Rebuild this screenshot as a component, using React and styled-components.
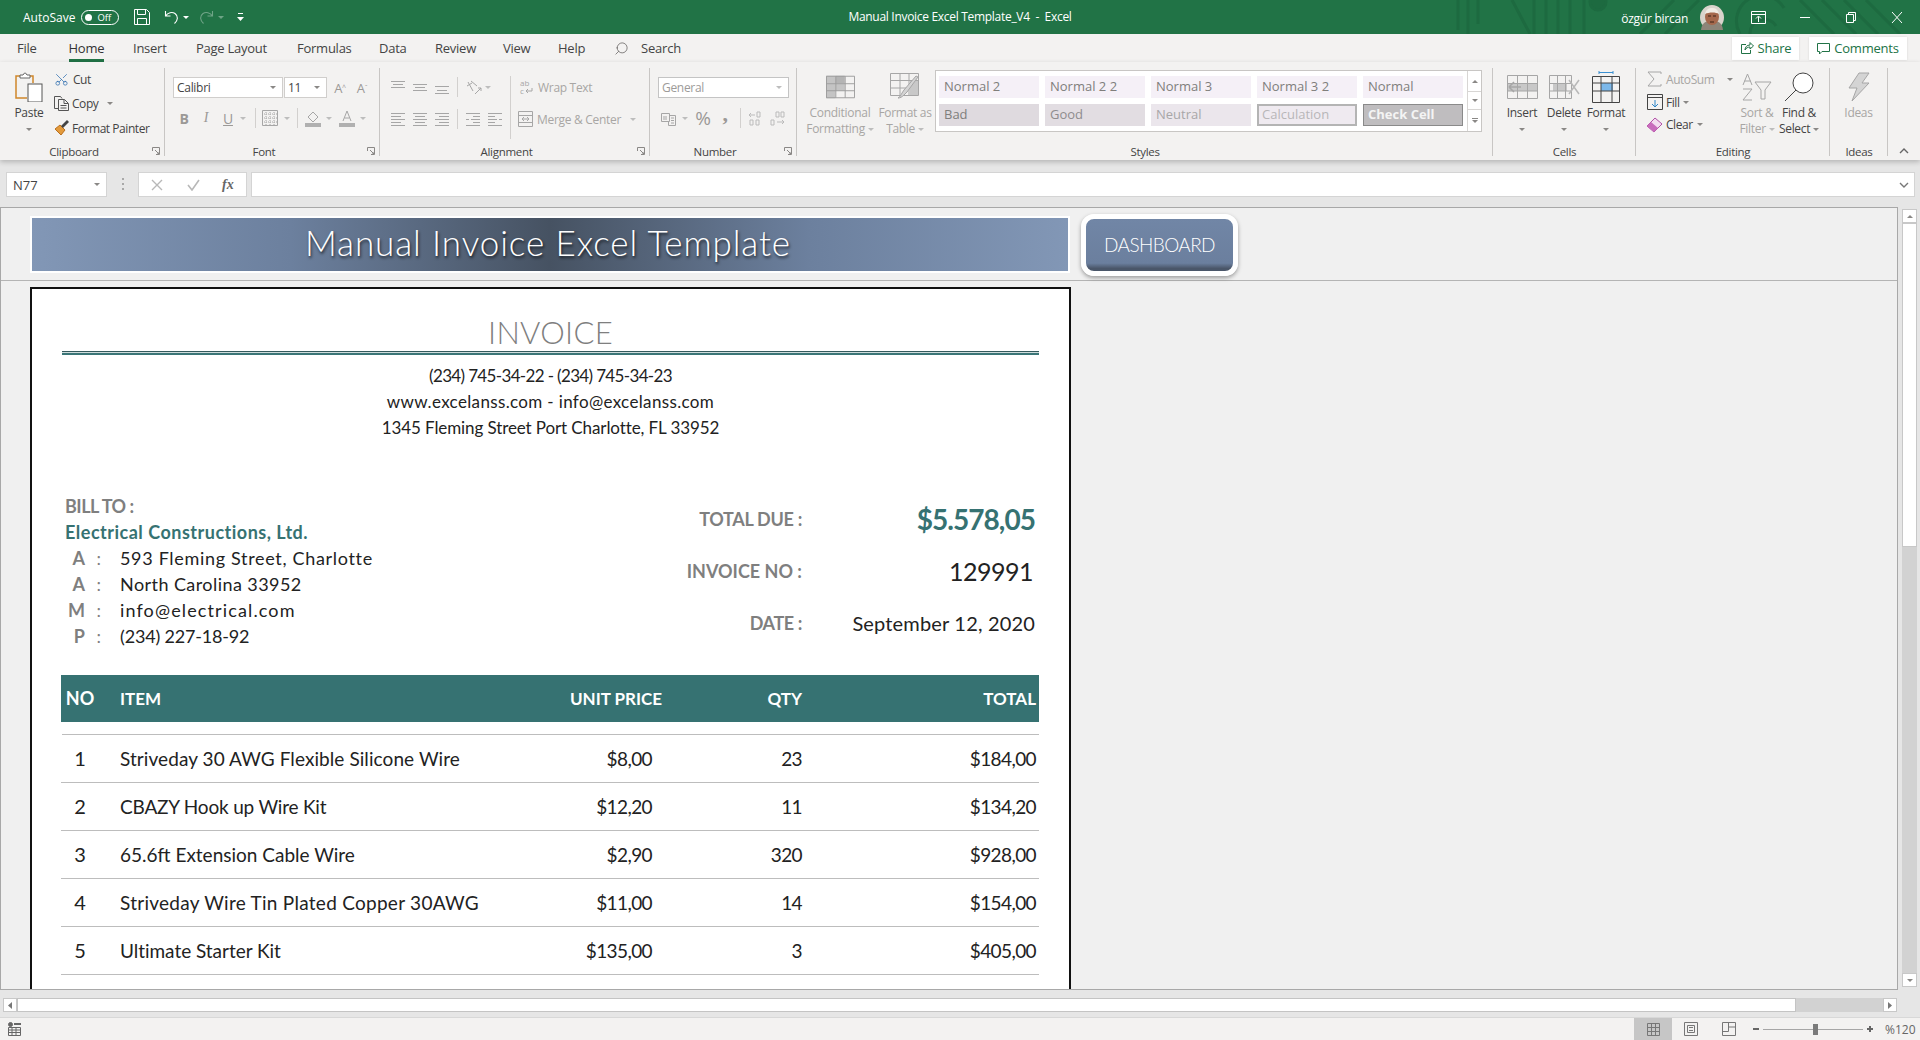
import React from "react";
import styled, { createGlobalStyle } from "styled-components";
import { Search, Scissors } from "lucide-react";

const UI = `"Open Sans", "Noto Sans", sans-serif`;
const GOTHIC = `Lato, "Open Sans", sans-serif`;

const Global = createGlobalStyle`
  html, body { margin: 0; padding: 0; background: #f3f2f1; }
  * { box-sizing: border-box; }
  #root { width: 1920px; height: 1040px; overflow: hidden; }
`;

const Page = styled.div`
  width: 1920px;
  height: 1040px;
  display: flex;
  flex-direction: column;
  font-family: ${UI};
  overflow: hidden;
`;

/* title bar */
const TitleBar = styled.div`
  position: relative;
  height: 34px;
  background: #217346;
  color: #fff;
  display: flex;
  align-items: center;
  font-size: 12px;
  flex-shrink: 0;
`;
const Pattern = styled.svg`
  position: absolute;
  right: 0;
  top: 0;
`;
const TitleSide = styled.div`
  position: relative;
  flex: 1;
  display: flex;
  align-items: center;
  justify-content: ${(p) => (p.$end ? "flex-end" : "flex-start")};
`;
const AutoSave = styled.span`
  margin-left: 23px;
`;
const TitleText = styled.div`
  position: relative;
  letter-spacing: -0.3px;
  margin-top: -2px;
  white-space: pre;
`;
const Toggle = styled.div`
  width: 37.5px;
  height: 15px;
  margin-left: 6px;
  border: 1px solid #fff;
  border-radius: 8px;
  display: flex;
  align-items: center;
  padding-left: 3px;
  font-size: 9.5px;
  &::before {
    content: "";
    width: 7px;
    height: 7px;
    border-radius: 50%;
    background: #fff;
    margin-right: 5px;
  }
`;
const TitleIcon = styled.div`
  display: flex;
  margin-left: ${(p) => p.$ml || 0}px;
  opacity: ${(p) => (p.$dim ? 0.35 : 1)};
`;
const UserName = styled.span`
  margin-top: 3px;
  letter-spacing: -0.25px;
  font-size: 12px;
`;

/* tabs */
const TabRow = styled.div`
  height: 28px;
  background: #f3f2f1;
  display: flex;
  align-items: stretch;
  padding: 0 13px 0 17px;
  font-size: 13px;
  color: #444;
  flex-shrink: 0;
`;
const Tab = styled.div`
  width: ${(p) => p.$w}px;
  flex-shrink: 0;
  display: flex;
  align-items: center;
  letter-spacing: -0.25px;
  span {
    height: 28px;
    line-height: 29px;
    border-bottom: ${(p) => (p.$active ? "3px solid #217346" : "0")};
    color: ${(p) => (p.$active ? "#333" : "#444")};
  }
`;
const SearchBox = styled.div`
  display: flex;
  align-items: center;
  gap: 12px;
  letter-spacing: -0.2px;
`;
const ShareBtn = styled.div`
  align-self: center;
  height: 23px;
  width: ${(p) => p.$w}px;
  margin-left: ${(p) => (p.$auto ? "auto" : p.$ml + "px")};
  background: #fff;
  color: #217346;
  box-shadow: 0 0 2px rgba(0, 0, 0, 0.12);
  display: flex;
  align-items: center;
  justify-content: center;
  gap: 4px;
  font-size: 13px;
  letter-spacing: -0.2px;
`;

/* ribbon */
const Ribbon = styled.div`
  height: 98px;
  background: #f3f2f1;
  display: flex;
  position: relative;
  z-index: 2;
  font-size: 12px;
  color: #444;
  letter-spacing: -0.3px;
  box-shadow: 0 2px 5px rgba(0, 0, 0, 0.22);
  flex-shrink: 0;
`;
const Group = styled.div`
  width: ${(p) => p.$w}px;
  flex-shrink: 0;
  position: relative;
  display: flex;
  flex-direction: column;
  &::after {
    content: "";
    position: absolute;
    right: 0;
    top: 6px;
    bottom: 4px;
    width: 1px;
    background: #c8c6c4;
  }
`;
const GroupBody = styled.div`
  height: 80px;
  flex-shrink: 0;
  padding: ${(p) => p.$pt ?? 10}px 0 0 ${(p) => p.$pl || 0}px;
  display: flex;
  align-items: flex-start;
`;
const GroupLabel = styled.div`
  flex-shrink: 0;
  text-align: center;
  padding-right: ${(p) => (p.$launch ? 17 : 0)}px;
  line-height: 20px;
  font-size: 11.5px;
  color: #444;
`;
const Launcher = styled.svg`
  position: absolute;
  right: 5px;
  bottom: 5px;
`;
const Collapse = styled.div`
  flex: 1;
  display: flex;
  align-items: flex-end;
  justify-content: center;
  padding-bottom: 6px;
`;
const Big = styled.div`
  width: ${(p) => p.$w}px;
  margin-left: ${(p) => p.$ml || 0}px;
  margin-top: ${(p) => p.$mt || 0}px;
  display: flex;
  flex-direction: column;
  align-items: center;
  color: ${(p) => (p.$off ? "#a8a6a4" : "#444")};
  line-height: 16px;
  text-align: center;
  white-space: nowrap;
`;
const BigIcon = styled.div`
  height: 30px;
  margin-bottom: 3px;
  display: flex;
  align-items: center;
  justify-content: center;
`;
const Caret = styled.i`
  display: inline-block;
  width: 0;
  height: 0;
  vertical-align: middle;
  border-left: 3px solid transparent;
  border-right: 3px solid transparent;
  border-top: 3px solid ${(p) => p.$c || "#8a8886"};
  margin-left: ${(p) => p.$ml || 0}px;
  margin-top: ${(p) => p.$mt || 0}px;
  flex-shrink: 0;
`;
const Col = styled.div`
  display: flex;
  flex-direction: column;
  width: ${(p) => (p.$w ? p.$w + "px" : "auto")};
  margin-left: ${(p) => p.$ml || 0}px;
  margin-top: ${(p) => p.$mt || 0}px;
`;
const SmallBtn = styled.div`
  display: flex;
  align-items: center;
  height: ${(p) => p.$h || 24}px;
  color: ${(p) => (p.$off ? "#a8a6a4" : "#444")};
  gap: ${(p) => p.$gap ?? 4}px;
  letter-spacing: -0.45px;
  white-space: nowrap;
`;
const ToolRow = styled.div`
  display: flex;
  align-items: center;
  height: ${(p) => p.$h}px;
  margin-top: ${(p) => p.$mt || 0}px;
  color: #a8a6a4;
  white-space: nowrap;
`;
const WrapGlyph = styled.div`
  width: 15px;
  display: flex;
  flex-direction: column;
  font-size: 8px;
  line-height: 8px;
  letter-spacing: 0;
  color: #a6a6a6;
  div {
    display: flex;
    align-items: center;
    gap: 1px;
  }
`;
const Select = styled.div`
  width: ${(p) => p.$w}px;
  height: 21px;
  margin-left: ${(p) => p.$ml || 0}px;
  background: #fff;
  border: 1px solid ${(p) => (p.$off ? "#c4c4c4" : "#d0cecc")};
  color: ${(p) => (p.$off ? "#9d9b99" : "#444")};
  display: flex;
  align-items: center;
  justify-content: space-between;
  padding: 0 6px 0 3px;
  font-size: 12px;
`;
const Cell = styled.div`
  width: ${(p) => p.$w}px;
  margin-left: ${(p) => p.$ml || 0}px;
  margin-top: ${(p) => p.$mt || 0}px;
  display: flex;
  justify-content: center;
  align-items: center;
  font: ${(p) => p.$font || "inherit"};
  color: #9b9997;
`;
const VSep = styled.div`
  width: 1px;
  height: ${(p) => p.$h}px;
  margin-left: ${(p) => p.$ml || 0}px;
  background: #d2d0ce;
  flex-shrink: 0;
`;
const Place = styled.div`
  display: flex;
  margin-left: ${(p) => p.$ml || 0}px;
  align-items: center;
`;

/* styles gallery */
const Gallery = styled.div`
  width: 547px;
  height: 62px;
  margin-top: -2px;
  background: #fff;
  border: 1px solid #c8c6c4;
  display: flex;
  justify-content: space-between;
`;
const GalleryGrid = styled.div`
  display: grid;
  grid-template-columns: repeat(5, 100px);
  grid-auto-rows: 22px;
  gap: 6px;
  padding: 5px 0 0 3px;
`;
const StyleCell = styled.div`
  background: ${(p) => p.$bg || "#f5f0f7"};
  color: ${(p) => p.$c || "#807e7c"};
  border: ${(p) => p.$border || "0"};
  font-weight: ${(p) => (p.$bold ? 700 : 400)};
  font-size: 13px;
  line-height: ${(p) => (p.$border ? 17 : 20)}px;
  padding-left: ${(p) => (p.$border ? 3 : 5)}px;
  outline: ${(p) => (p.$double ? "1px solid #8a8a8a" : "0")};
  outline-offset: -1px;
  letter-spacing: 0;
  white-space: nowrap;
  overflow: hidden;
`;
const GalleryScroll = styled.div`
  width: 14px;
  border-left: 1px solid #d8d6d4;
  display: grid;
  grid-template-rows: 21px 18px 1fr;
`;
const ScrollCell = styled.div`
  border-bottom: ${(p) => (p.$last ? 0 : 1)}px solid #d8d6d4;
  display: flex;
  flex-direction: column;
  gap: 1px;
  align-items: center;
  justify-content: center;
`;
const UpCaret = styled.i`
  width: 0;
  height: 0;
  border-left: 3px solid transparent;
  border-right: 3px solid transparent;
  border-bottom: 3px solid #8a8886;
`;
const Dash = styled.i`
  width: 6px;
  height: 1px;
  background: #8a8886;
`;

/* formula bar */
const FormulaBar = styled.div`
  height: 47px;
  background: #e6e6e6;
  display: flex;
  align-items: flex-start;
  padding: 12px 5px 0 6px;
  flex-shrink: 0;
`;
const FormulaBox = styled.div`
  height: 25px;
  width: ${(p) => (p.$w ? p.$w + "px" : "auto")};
  flex: ${(p) => (p.$w ? "none" : 1)};
  margin-left: ${(p) => p.$ml || 0}px;
  background: #fff;
  border: 1px solid #d4d4d4;
  display: flex;
  align-items: center;
  justify-content: ${(p) => p.$justify || "flex-start"};
  padding: ${(p) => p.$pad || "0"};
  font-size: 13px;
  color: #444;
`;
const Dots = styled.div`
  width: 2px;
  height: 12px;
  margin: 6px 0 0 15px;
  background: repeating-linear-gradient(#a8a8a8 0 2px, transparent 2px 5px);
`;
const Fx = styled.span`
  font-family: "Liberation Serif", serif;
  font-style: italic;
  font-weight: 700;
  font-size: 14px;
  color: #666;
  margin-left: 22px;
`;

/* sheet */
const SheetRow = styled.div`
  height: 783px;
  display: flex;
  background: #e6e6e6;
  flex-shrink: 0;
`;
const Sheet = styled.div`
  width: 1898px;
  background: #f0f0f0;
  border: 1px solid #a8a8a8;
  overflow: hidden;
`;
const BannerRow = styled.div`
  height: 73px;
  border-bottom: 1px solid #b4b4b4;
  display: flex;
  align-items: flex-start;
  padding: 10px 0 0 31px;
`;
const Banner = styled.div`
  width: 1036px;
  height: 53px;
  background: linear-gradient(90deg, #8297b6 0%, #6c809e 25%, #465262 50%, #6c809e 75%, #8297b6 100%);
  box-shadow: 0 0 0 2px #fff;
  color: #fff;
  display: flex;
  align-items: center;
  justify-content: center;
  padding: 0 4px 6px 0;
  font-family: ${GOTHIC};
  font-size: 35px;
  font-weight: 300;
  letter-spacing: 0.9px;
  text-shadow: 1px 2px 3px rgba(0, 0, 0, 0.7);
`;
const DashBtn = styled.div`
  width: 157px;
  height: 62px;
  margin: -4px 0 0 13px;
  border: 5px solid #fff;
  border-radius: 13px;
  background: linear-gradient(#7186a6, #6b7f9e 85%, #4a5669 95%);
  box-shadow: 0 2px 4px rgba(0, 0, 0, 0.35);
  color: #fff;
  display: flex;
  align-items: center;
  justify-content: center;
  padding-bottom: 2px;
  font-family: ${GOTHIC};
  font-size: 19px;
  font-weight: 300;
  letter-spacing: -0.6px;
`;
const Invoice = styled.div`
  width: 1041px;
  height: 760px;
  margin: 6px 0 0 29px;
  background: #fff;
  border: 2px solid #111;
  padding: 0 30px;
  font-family: ${GOTHIC};
  color: #222;
`;
const InvoiceTitle = styled.div`
  height: 36px;
  margin-top: 26px;
  line-height: 34px;
  text-align: center;
  font-size: 31px;
  font-weight: 300;
  color: #7f7f7f;
  letter-spacing: 0.3px;
`;
const TitleRule = styled.div`
  height: 4px;
  margin-top: 0;
  border-top: 1px solid #34595c;
  border-bottom: 2px solid #3b7678;
  background: #cfdcdc;
`;
const Contact = styled.div`
  margin-top: 8px;
  text-align: center;
  font-size: 17px;
  line-height: 26px;
`;
const ContactLine = styled.div`
  letter-spacing: ${(p) => p.$ls}px;
`;
const BillWrap = styled.div`
  display: flex;
  justify-content: space-between;
  margin-top: 52px;
`;
const BillTo = styled.div`
  padding-left: 3px;
  font-size: 18px;
  line-height: 26px;
`;
const BillHead = styled.div`
  color: ${(p) => p.$c};
  font-weight: 700;
  letter-spacing: ${(p) => p.$ls || 0}px;
`;
const BillLine = styled.div`
  display: grid;
  grid-template-columns: 20px 16px 1fr;
`;
const BillKey = styled.span`
  text-align: right;
  color: #7f7f7f;
  font-weight: 700;
`;
const BillColon = styled.span`
  text-align: right;
  color: #7f7f7f;
`;
const BillValue = styled.span`
  padding-left: 19px;
  letter-spacing: ${(p) => p.$ls}px;
`;
const Summary = styled.div`
  display: grid;
  grid-template-columns: auto 233px;
  grid-auto-rows: 52px;
  align-items: center;
  margin: 0 4px 0 0;
  height: 156px;
`;
const SummaryKey = styled.div`
  text-align: right;
  color: #7f7f7f;
  font-weight: 700;
  font-size: 18px;
  letter-spacing: ${(p) => p.$ls || 0}px;
`;
const SummaryVal = styled.div`
  text-align: right;
  font-size: ${(p) => p.$size}px;
  font-weight: ${(p) => (p.$bold ? 700 : 400)};
  color: ${(p) => p.$c || "#222"};
  letter-spacing: ${(p) => p.$ls || 0}px;
  padding-right: ${(p) => p.$pr || 0}px;
  padding-bottom: 1px;
`;
const grid = `
  display: grid;
  grid-template-columns: 59px 1fr 120px 140px 237px;
  margin-left: -1px;
  align-items: center;
`;
const TableHead = styled.div`
  ${grid}
  height: 47px;
  margin-top: 26px;
  padding-bottom: 1px;
  background: #367272;
  color: #fff;
  font-weight: 700;
  font-size: 17px;
`;
const TableBody = styled.div`
  margin-top: 12px;
  border-top: 1px solid #bdbdbd;
`;
const TableRow = styled.div`
  ${grid}
  height: 48px;
  padding-bottom: 1px;
  border-bottom: 1px solid #bdbdbd;
  font-size: 19px;
`;
const NoCell = styled.div`
  width: 38px;
  text-align: center;
  font-size: ${(p) => (p.$head ? 18 : 20)}px;
`;
const ItemCell = styled.div`
  white-space: nowrap;
  letter-spacing: ${(p) => p.$ls}px;
`;
const NumCell = styled.div`
  text-align: right;
  padding-right: ${(p) => p.$pr || 0}px;
  letter-spacing: ${(p) => p.$ls || 0}px;
`;

/* scrollbars + status */
const VScroll = styled.div`
  flex: 1;
  padding: 2px 0 0 4px;
  display: flex;
  flex-direction: column;
  height: 780px;
`;
const ScrollBtn = styled.div`
  width: ${(p) => p.$w || 15}px;
  height: ${(p) => p.$h || 14}px;
  background: #fff;
  border: 1px solid #c8c8c8;
  display: flex;
  align-items: center;
  justify-content: center;
  flex-shrink: 0;
`;
const VTrack = styled.div`
  flex: 1;
  width: 15px;
  background: #d2d2d2;
`;
const VThumb = styled.div`
  height: 324px;
  background: #fff;
  border: 1px solid #c8c8c8;
`;
const HStrip = styled.div`
  height: 28px;
  background: #e6e6e6;
  padding: 8px 0 0 3px;
  display: flex;
  flex-shrink: 0;
  border-bottom: 1px solid #d8d8d8;
`;
const HTrack = styled.div`
  width: 1866px;
  height: 14px;
  background: #d2d2d2;
`;
const HThumb = styled.div`
  width: 1779px;
  height: 14px;
  background: #fff;
  border: 1px solid #c4c4c4;
`;
const StatusBar = styled.div`
  flex: 1;
  background: #f3f2f1;
  display: flex;
  align-items: center;
  color: #666;
  font-size: 12px;
  position: relative;
`;
const ViewBtn = styled.div`
  width: ${(p) => p.$w}px;
  height: 22px;
  margin-left: ${(p) => p.$ml || 0}px;
  background: ${(p) => (p.$on ? "#c6c6c6" : "transparent")};
  display: flex;
  align-items: center;
  justify-content: center;
`;
const ZoomTrack = styled.div`
  position: relative;
  width: 100px;
  height: 1px;
  margin-left: 4px;
  background: #a6a6a6;
`;
const ZoomThumb = styled.div`
  position: absolute;
  left: 50px;
  top: -5px;
  width: 5px;
  height: 11px;
  background: #7a7a7a;
`;
const ZoomSign = styled.div`
  width: 6px;
  height: 2px;
  margin-left: ${(p) => p.$ml}px;
  background: #666;
  position: relative;
  &::after {
    content: "";
    display: ${(p) => (p.$plus ? "block" : "none")};
    position: absolute;
    left: 2px;
    top: -2px;
    width: 2px;
    height: 6px;
    background: #666;
  }
`;
const ZoomText = styled.span`
  margin-left: 12px;
  letter-spacing: 0;
`;

/* small drawn icons */
const OFF = "#a6a6a6";

const Bars = ({ rows, w = 14, c = OFF }) => (
  <svg width={w} height="14" viewBox={`0 0 ${w} 14`}>
    {rows.map(([y, a, b], i) => (
      <line key={i} x1={a} x2={b} y1={y + 0.5} y2={y + 0.5} stroke={c} />
    ))}
  </svg>
);

const Table = ({ w = 31, h = 24, fills = [], c = "#b4b4b4", stroke = "#9a9a9a" }) => (
  <svg width={w} height={h} viewBox="0 0 31 24">
    {fills.map(([x, y, fw, fh, col], i) => (
      <rect key={i} x={x} y={y} width={fw} height={fh} fill={col || c} />
    ))}
    <path d="M.5 .5h30v23H.5zM.5 8.5h30M.5 16h30M10.5 .5v23M20.5 .5v23" fill="none" stroke={stroke} />
  </svg>
);

const GroupLauncher = () => (
  <Launcher width="8" height="8" viewBox="0 0 8 8">
    <path d="M.5 4V.5H7.5V7.5H4M3 3l4 4M5 7h2V5" fill="none" stroke="#8a8886" />
  </Launcher>
);

const tabs = [
  ["File", 51.5], ["Home", 64.5, true], ["Insert", 63], ["Page Layout", 101], ["Formulas", 82],
  ["Data", 56], ["Review", 68], ["View", 55], ["Help", 56],
];

const rows = [
  [1, "Striveday 30 AWG Flexible Silicone Wire", 0.08, "$8,00", 23, "$184,00"],
  [2, "CBAZY Hook up Wire Kit", -0.2, "$12,20", 11, "$134,20"],
  [3, "65.6ft Extension Cable Wire", 0, "$2,90", 320, "$928,00"],
  [4, "Striveday Wire Tin Plated Copper 30AWG", 0.27, "$11,00", 14, "$154,00"],
  [5, "Ultimate Starter Kit", -0.03, "$135,00", 3, "$405,00"],
];

export default function App() {
  return (
    <Page>
      <Global />
      <TitleBar>
        <Pattern width="470" height="34" viewBox="0 0 470 34">
          <g stroke="#1d6a40" strokeWidth="3" fill="none">
            <path d="M8 0v30M18 0v34M28 0v24M62 0l18 34M84 0v34M96 0v34M108 0v34M120 0v34M134 0v34" />
            <circle cx="148" cy="2" r="8" fill="#1d6a40" />
            <path d="M190 34l34-34M215 34l34-34M290 34a24 24 0 0 1 44-26M300 34a14 14 0 0 1 26-8M350 0l34 34M372 0l34 34M394 0l34 34M416 0l34 34" />
          </g>
        </Pattern>
        <TitleSide>
          <AutoSave>AutoSave</AutoSave>
          <Toggle>Off</Toggle>
          <TitleIcon $ml={15.5}>
            <svg width="16" height="16" viewBox="0 0 16 16" fill="none" stroke="#fff">
              <path d="M.5 .5h12l3 3v12H.5zM3.5 .5v5h8v-5M3.5 15.5v-6h9v6" />
            </svg>
          </TitleIcon>
          <TitleIcon $ml={14}>
            <svg width="15" height="15" viewBox="0 0 15 15" fill="none" stroke="#fff" strokeWidth="1.1">
              <path d="M1.5 1v5h5M1.5 6C4 2.5 8 1.5 11 3.5c3.5 2.5 3 7-.5 10" />
            </svg>
          </TitleIcon>
          <Caret $c="#fff" $ml={4} />
          <TitleIcon $ml={10} $dim>
            <svg width="15" height="15" viewBox="0 0 15 15" fill="none" stroke="#fff" strokeWidth="1.1">
              <path d="M13.5 1v5h-5M13.5 6C11 2.5 7 1.5 4 3.5c-3.5 2.5-3 7 .5 10" />
            </svg>
          </TitleIcon>
          <TitleIcon $ml={4} $dim><Caret $c="#fff" /></TitleIcon>
          <TitleIcon $ml={13}>
            <svg width="7" height="9" viewBox="0 0 7 9" fill="#fff">
              <rect x="1" y="0" width="5" height="1" />
              <path d="M0 4h7L3.5 8z" />
            </svg>
          </TitleIcon>
        </TitleSide>
        <TitleText>{"Manual Invoice Excel Template_V4  -  Excel"}</TitleText>
        <TitleSide $end>
          <UserName>özgür bircan</UserName>
          <TitleIcon $ml={12}>
            <svg width="24" height="25" viewBox="0 0 24 25">
              <ellipse cx="12" cy="12.5" rx="12" ry="12.5" fill="#d9d4cc" />
              <path d="M1 25c1-8 5-9 11-9s10 1 11 9z" fill="#8d8579" />
              <ellipse cx="12" cy="12" rx="7" ry="8" fill="#a5684c" />
              <path d="M5 9c1-5 4-6 7-6s6 1 7 6c-3-2-10-2-14 0z" fill="#f0ece4" />
              <path d="M8 11h3M13 11h3M10 17h4" stroke="#3c2418" />
            </svg>
          </TitleIcon>
          <TitleIcon $ml={27}>
            <svg width="15" height="13" viewBox="0 0 15 13" fill="none" stroke="#fff">
              <path d="M.5 .5h14v12H.5zM.5 3.5h14M7.5 11V5.5M5 7.5l2.5-2.5L10 7.5" />
            </svg>
          </TitleIcon>
          <TitleIcon $ml={34}>
            <svg width="10" height="10" viewBox="0 0 10 10" stroke="#fff"><path d="M0 5.5h10" /></svg>
          </TitleIcon>
          <TitleIcon $ml={36}>
            <svg width="10" height="11" viewBox="0 0 10 11" fill="none" stroke="#fff">
              <path d="M.5 2.5h7v8h-7zM2.5 2.5v-2h7v8h-2" />
            </svg>
          </TitleIcon>
          <TitleIcon $ml={36}>
            <svg width="10" height="11" viewBox="0 0 10 11" stroke="#fff"><path d="M0 0l10 11M10 0L0 11" /></svg>
          </TitleIcon>
          <TitleIcon $ml={18} />
        </TitleSide>
      </TitleBar>

      <TabRow>
        {tabs.map(([t, w, on]) => (
          <Tab key={t} $w={w} $active={on}><span>{t}</span></Tab>
        ))}
        <SearchBox>
          <Search size={15} strokeWidth={1.2} color="#605e5c" style={{ transform: "scaleX(-1)" }} />
          Search
        </SearchBox>
        <ShareBtn $w={67} $auto>
          <svg width="14" height="14" viewBox="0 0 14 14" fill="none" stroke="#217346">
            <path d="M6 3.5H1.5v9h9V9M5 9c0-3 2-5 5-5V1.5l3.5 3.5L10 8V6C8 6 6 7 5 9z" />
          </svg>
          Share
        </ShareBtn>
        <ShareBtn $w={98} $ml={10}>
          <svg width="13" height="13" viewBox="0 0 13 13" fill="none" stroke="#217346">
            <path d="M.5 1.5h12v8H5l-2.5 2.5V9.500H.5z" />
          </svg>
          Comments
        </ShareBtn>
      </TabRow>

      <Ribbon>
        <Group $w={165}>
          <GroupBody $pl={4}>
            <Big $w={50}>
              <BigIcon>
                <svg width="28" height="30" viewBox="0 0 28 30" fill="none">
                  <path d="M9 4H1v22h11" stroke="#d0872a" strokeWidth="1.5" />
                  <path d="M14 4h4v7" stroke="#d0872a" strokeWidth="1.5" />
                  <path d="M5 6V3h3l1.500-2h1L12 3h3v3z" fill="#fff" stroke="#666" />
                  <rect x="13" y="12" width="14" height="18" fill="#fff" stroke="#555" />
                </svg>
              </BigIcon>
              <span>Paste</span>
              <Caret $mt={7} />
            </Big>
            <Col $mt={-5}>
              <SmallBtn $h={24} $gap={4}>
                <Scissors size={15} strokeWidth={1.2} color="#2f6fb0" style={{ transform: "rotate(-90deg)" }} />
                Cut
              </SmallBtn>
              <SmallBtn $h={25} $gap={3}>
                <svg width="15" height="15" viewBox="0 0 15 15" fill="none" stroke="#555">
                  <path d="M4 12.500H.5V.5h6l1.500 2M4.500 3.500h6l4 4v7h-10zM10 3.500v4h4M6.500 9.500h6M6.500 12h6" />
                </svg>
                Copy
                <Caret $ml={6} />
              </SmallBtn>
              <SmallBtn $h={24} $gap={2}>
                <svg width="16" height="16" viewBox="0 0 16 16">
                  <path d="M1 9l5-4 5 5-4 5z" fill="#e39a3b" stroke="#b96f1d" />
                  <path d="M7 6l6-6 2 2-6 6z" fill="#444" />
                </svg>
                Format Painter
              </SmallBtn>
            </Col>
          </GroupBody>
          <GroupLabel $launch>Clipboard</GroupLabel>
          <GroupLauncher />
        </Group>

        <Group $w={215}>
          <GroupBody $pl={8} $pt={15}>
            <Col>
              <ToolRow $h={21}>
                <Select $w={110}>Calibri<Caret /></Select>
                <Select $w={43} $ml={1}>11<Caret /></Select>
                <Cell $w={14} $ml={6} $font={`13px ${UI}`}>A<sup style={{ fontSize: 7 }}>^</sup></Cell>
                <Cell $w={14} $ml={8} $font={`13px ${UI}`}>A<sup style={{ fontSize: 7 }}>ˇ</sup></Cell>
              </ToolRow>
              <ToolRow $h={22} $mt={9}>
                <Cell $w={22} $font={`700 14px ${UI}`}>B</Cell>
                <Cell $w={22} $font={`italic 14px "Liberation Serif", serif`}>I</Cell>
                <Cell $w={22} $font={`14px ${UI}`}><u>U</u></Cell>
                <Cell $w={8}><Caret $c="#bdbdbd" /></Cell>
                <VSep $h={20} $ml={8} />
                <Place $ml={6}>
                  <svg width="16" height="16" viewBox="0 0 16 16" fill="none" stroke="#a6a6a6">
                    <path d="M.5 .5h15v15H.5z" />
                    <path d="M8 0v16M0 8h16M4 0v16M12 0v16M0 4h16M0 12h16" strokeDasharray="1 1" />
                  </svg>
                </Place>
                <Cell $w={8} $ml={5}><Caret $c="#bdbdbd" /></Cell>
                <VSep $h={20} $ml={6} />
                <Place $ml={7}>
                  <svg width="16" height="17" viewBox="0 0 16 17">
                    <path d="M3 7l5-5 5 5-5 5z" fill="none" stroke="#a6a6a6" />
                    <rect x="0" y="13" width="16" height="4" fill="#b0b0b0" />
                  </svg>
                </Place>
                <Cell $w={8} $ml={4}><Caret $c="#bdbdbd" /></Cell>
                <Place $ml={6}>
                  <svg width="16" height="17" viewBox="0 0 16 17">
                    <path d="M4 11L8 1l4 10M5.500 8h5" fill="none" stroke="#a6a6a6" />
                    <rect x="0" y="13" width="16" height="4" fill="#b0b0b0" />
                  </svg>
                </Place>
                <Cell $w={8} $ml={4}><Caret $c="#bdbdbd" /></Cell>
              </ToolRow>
            </Col>
          </GroupBody>
          <GroupLabel $launch>Font</GroupLabel>
          <GroupLauncher />
        </Group>

        <Group $w={270}>
          <GroupBody $pl={11} $pt={14}>
            <Col $w={119}>
              <ToolRow $h={22}>
                <Bars rows={[[1, 0, 14], [4, 2, 12], [7, 0, 14]]} />
                <Place $ml={8}><Bars rows={[[4, 0, 14], [7, 2, 12], [10, 0, 14]]} /></Place>
                <Place $ml={8}><Bars rows={[[6, 0, 14], [10, 2, 12], [13, 0, 14]]} /></Place>
                <VSep $h={20} $ml={8} />
                <Place $ml={8}>
                  <svg width="16" height="15" viewBox="0 0 16 15" fill="none" stroke="#a6a6a6">
                    <path d="M2 2l5 9M5 1l6 5M1 6l5-3M9 14l6-6M15 8h-3M15 8v3" />
                  </svg>
                </Place>
                <Caret $ml={3} $c="#bdbdbd" />
              </ToolRow>
              <ToolRow $h={22} $mt={10}>
                <Bars rows={[[1, 0, 14], [4, 0, 10], [7, 0, 14], [10, 0, 10], [13, 0, 14]]} />
                <Place $ml={8}><Bars rows={[[1, 0, 14], [4, 2, 12], [7, 0, 14], [10, 2, 12], [13, 0, 14]]} /></Place>
                <Place $ml={8}><Bars rows={[[1, 0, 14], [4, 4, 14], [7, 0, 14], [10, 4, 14], [13, 0, 14]]} /></Place>
                <VSep $h={20} $ml={8} />
                <Place $ml={8}><Bars rows={[[1, 0, 14], [4, 7, 14], [7, 5, 14], [10, 7, 14], [13, 0, 14], [7, 0, 3]]} /></Place>
                <Place $ml={8}><Bars rows={[[1, 0, 14], [4, 0, 7], [7, 0, 9], [10, 0, 7], [13, 0, 14], [7, 11, 14]]} /></Place>
              </ToolRow>
            </Col>
            <VSep $h={63} $ml={0} />
            <Col $ml={7}>
              <ToolRow $h={22}>
                <Place $ml={2}>
                  <WrapGlyph>
                    <span>ab</span>
                    <div>
                      c
                      <svg width="8" height="6" viewBox="0 0 8 6" fill="none" stroke="#a6a6a6">
                        <path d="M7 0v3H1M1 3l2-2M1 3l2 2" />
                      </svg>
                    </div>
                  </WrapGlyph>
                </Place>
                <Place $ml={3}>Wrap Text</Place>
              </ToolRow>
              <ToolRow $h={22} $mt={10}>
                <svg width="15" height="16" viewBox="0 0 15 16" fill="none" stroke="#a6a6a6">
                  <path d="M.5 .5h14v15H.5zM0 4.500h15M0 11.500h15M4 8h7M4 8l2-2M4 8l2 2M11 8L9 6M11 8l-2 2" />
                </svg>
                <Place $ml={4}>Merge &amp; Center</Place>
                <Caret $ml={9} $c="#bdbdbd" />
              </ToolRow>
            </Col>
          </GroupBody>
          <GroupLabel $launch>Alignment</GroupLabel>
          <GroupLauncher />
        </Group>

        <Group $w={147}>
          <GroupBody $pl={8} $pt={15}>
            <Col>
              <ToolRow $h={21}><Select $w={131} $off>General<Caret $c="#bdbdbd" /></Select></ToolRow>
              <ToolRow $h={22} $mt={9}>
                <Place $ml={3}>
                  <svg width="15" height="15" viewBox="0 0 15 15" fill="none" stroke="#a6a6a6">
                    <path d="M.5 2.500h8v8h-8zM8.500 4.500h6v10h-7v-4M3 5v4M5 5v4M10 7h3M10 9.500h3M10 12h3" />
                  </svg>
                </Place>
                <Caret $ml={6} $c="#bdbdbd" />
                <Cell $w={14} $ml={8} $font={`19px ${UI}`}>%</Cell>
                <Cell $w={8} $ml={11} $mt={-9} $font={`700 22px "Liberation Serif", serif`}>,</Cell>
                <VSep $h={20} $ml={11} />
                <Place $ml={7}>
                  <svg width="13" height="15" viewBox="0 0 13 15" fill="none" stroke="#bbb">
                    <path d="M1 4h6M1 4l2-2M1 4l2 2M9 1h3v5H9zM2 9h3v5H2zM8 9h3v5H8z" />
                  </svg>
                </Place>
                <Place $ml={9}>
                  <svg width="15" height="15" viewBox="0 0 15 15" fill="none" stroke="#bbb">
                    <path d="M6 1h3v5H6zM11 1h3v5h-3zM14 11H7M14 11l-2-2M14 11l-2 2M1 9h3v5H1z" />
                  </svg>
                </Place>
              </ToolRow>
            </Col>
          </GroupBody>
          <GroupLabel $launch>Number</GroupLabel>
          <GroupLauncher />
        </Group>

        <Group $w={696}>
          <GroupBody $pl={11}>
            <Big $w={64} $off>
              <BigIcon>
                <Table w={29} h={24} fills={[[0, 0, 10, 8, "#c4c4c4"], [10, 8, 10, 8, "#c4c4c4"], [0, 8, 10, 16, "#c4c4c4"], [10, 0, 10, 8]]} />
              </BigIcon>
              <span>Conditional</span>
              <span>Formatting <Caret $c="#bdbdbd" /></span>
            </Big>
            <Big $w={60} $ml={3} $off>
              <BigIcon>
                <svg width="30" height="28" viewBox="0 0 30 28" fill="none" stroke="#a6a6a6">
                  <path d="M.5 .5h28v22H.5zM.5 7.500h28M.5 15h28M10 .5v22M19 .5v22" />
                  <path d="M20 8h8v14h-8z" fill="#c8c8c8" stroke="none" />
                  <path d="M28 4L17 19l-3 3c-2 2-4 3-6 3 2-1 3-3 4-5l2-3L26 3z" fill="#d4d4d4" />
                </svg>
              </BigIcon>
              <span>Format as</span>
              <span>Table <Caret $c="#bdbdbd" /></span>
            </Big>
            <Gallery>
              <GalleryGrid>
                <StyleCell>Normal 2</StyleCell>
                <StyleCell>Normal 2 2</StyleCell>
                <StyleCell>Normal 3</StyleCell>
                <StyleCell>Normal 3 2</StyleCell>
                <StyleCell>Normal</StyleCell>
                <StyleCell $bg="#dfdadf">Bad</StyleCell>
                <StyleCell $bg="#e2dde2" $c="#8e8c8e">Good</StyleCell>
                <StyleCell $bg="#ebe6ec" $c="#a8a6a8">Neutral</StyleCell>
                <StyleCell $bg="#efeaf0" $c="#b8b6b8" $border="2px solid #b4b4b4">Calculation</StyleCell>
                <StyleCell $bg="#bfbdbf" $c="#f4f4f4" $bold $double $border="2px solid #bfbdbf">Check Cell</StyleCell>
              </GalleryGrid>
              <GalleryScroll>
                <ScrollCell><UpCaret /></ScrollCell>
                <ScrollCell><Caret /></ScrollCell>
                <ScrollCell $last><Dash /><Caret /></ScrollCell>
              </GalleryScroll>
            </Gallery>
          </GroupBody>
          <GroupLabel>Styles</GroupLabel>
        </Group>

        <Group $w={143}>
          <GroupBody $pl={8}>
            <Big $w={42}>
              <BigIcon>
                <svg width="31" height="24" viewBox="0 0 31 24">
                  <rect x="0" y="8" width="31" height="8" fill="#c8c8c8" />
                  <path d="M.5 .5h30v23H.5zM.5 8.500h30M.5 16h30M10.500 .5v23M20.500 .5v23" fill="none" stroke="#a6a6a6" />
                  <path d="M14 12H2M2 12l5-5M2 12l5 5" fill="none" stroke="#a6a6a6" strokeWidth="1.500" />
                </svg>
              </BigIcon>
              <span>Insert</span>
              <Caret $mt={7} />
            </Big>
            <Big $w={42}>
              <BigIcon>
                <svg width="31" height="24" viewBox="0 0 31 24">
                  <rect x="4" y="8" width="14" height="8" fill="#c8c8c8" />
                  <path d="M.5 .5h22v23H.5zM.5 8.500h22M.5 16h22M8.500 .5v23M16.500 .5v23" fill="none" stroke="#a6a6a6" />
                  <path d="M20 5l10 14M30 5L20 19" stroke="#b8b8b8" strokeWidth="1.500" />
                </svg>
              </BigIcon>
              <span>Delete</span>
              <Caret $mt={7} />
            </Big>
            <Big $w={42}>
              <BigIcon>
                <svg width="28" height="32" viewBox="0 0 28 32">
                  <path d="M7 1.500h14M7 0v3M21 0v3" stroke="#3a8fd0" fill="none" />
                  <rect x="9" y="12" width="12" height="8" fill="#7cb8ea" />
                  <path d="M.5 5.500h27v26H.5zM.5 12h27M.5 20h27M9 5.500v26M20 5.500v26" fill="none" stroke="#444" />
                </svg>
              </BigIcon>
              <span>Format</span>
              <Caret $mt={7} />
            </Big>
          </GroupBody>
          <GroupLabel>Cells</GroupLabel>
        </Group>

        <Group $w={194}>
          <GroupBody $pl={11} $pt={5}>
            <Col $w={89}>
              <SmallBtn $h={24} $gap={4} $off>
                <svg width="15" height="16" viewBox="0 0 15 16" fill="none" stroke="#a6a6a6">
                  <path d="M14 3V1H1l6 7-6 7h13v-2" />
                </svg>
                AutoSum
                <Caret $ml={9} />
              </SmallBtn>
              <SmallBtn $h={22} $gap={3}>
                <svg width="16" height="16" viewBox="0 0 16 16" fill="none">
                  <path d="M.5 .5h15v15H.5z" stroke="#444" />
                  <path d="M.5 3.500h15" stroke="#444" />
                  <path d="M8 6v7M5 10l3 3 3-3" stroke="#2e86c8" />
                </svg>
                Fill
                <Caret $ml={1} />
              </SmallBtn>
              <SmallBtn $h={23} $gap={3}>
                <svg width="16" height="16" viewBox="0 0 16 16">
                  <path d="M0 9l8-8 7 6-8 8z" fill="#f3dcf0" stroke="#b24fa7" />
                  <path d="M0 9l4-4 7 6-4 4z" fill="#c86cbc" />
                </svg>
                Clear
                <Caret $ml={1} />
              </SmallBtn>
            </Col>
            <Big $w={42} $off $mt={5}>
              <BigIcon>
                <svg width="30" height="28" viewBox="0 0 30 28" fill="none" stroke="#a6a6a6">
                  <path d="M1 12L5.500 1 10 12M2.500 8h6M1 16h9L1 27h9" />
                  <path d="M13 9h16l-6 8v9h-4v-9z" />
                </svg>
              </BigIcon>
              <span>Sort &amp;</span>
              <span>Filter <Caret $c="#bdbdbd" /></span>
            </Big>
            <Big $w={42} $mt={5}>
              <BigIcon>
                <svg width="30" height="30" viewBox="0 0 30 30" fill="none" stroke="#444">
                  <circle cx="19" cy="11" r="10" fill="#fff" />
                  <path d="M12 18L1 29" />
                </svg>
              </BigIcon>
              <span>Find &amp;</span>
              <span>Select <Caret /></span>
            </Big>
          </GroupBody>
          <GroupLabel>Editing</GroupLabel>
        </Group>

        <Group $w={58}>
          <GroupBody>
            <Big $w={57} $off>
              <BigIcon>
                <svg width="22" height="30" viewBox="0 0 22 30">
                  <path d="M11 1h10l-7 10h7L4 29l5-13H1z" fill="#d4d4d4" stroke="#a6a6a6" />
                </svg>
              </BigIcon>
              <span>Ideas</span>
            </Big>
          </GroupBody>
          <GroupLabel>Ideas</GroupLabel>
        </Group>

        <Collapse>
          <svg width="10" height="6" viewBox="0 0 10 6" fill="none" stroke="#666" strokeWidth="1.400">
            <path d="M1 5l4-4 4 4" />
          </svg>
        </Collapse>
      </Ribbon>

      <FormulaBar>
        <FormulaBox $w={101} $justify="space-between" $pad="0 6px 0 6px">N77<Caret /></FormulaBox>
        <Dots />
        <FormulaBox $w={109} $ml={14} $pad="0 0 0 12px">
          <svg width="12" height="12" viewBox="0 0 12 12" stroke="#b8b8b8" strokeWidth="1.400"><path d="M1 1l10 10M11 1L1 11" /></svg>
          <Place $ml={24}>
            <svg width="13" height="12" viewBox="0 0 13 12" stroke="#b8b8b8" fill="none" strokeWidth="1.600"><path d="M1 6l4 5 7-10" /></svg>
          </Place>
          <Fx>fx</Fx>
        </FormulaBox>
        <FormulaBox $ml={4} $justify="flex-end" $pad="0 5px 0 0">
          <svg width="10" height="6" viewBox="0 0 10 6" fill="none" stroke="#777" strokeWidth="1.400"><path d="M1 1l4 4 4-4" /></svg>
        </FormulaBox>
      </FormulaBar>

      <SheetRow>
        <Sheet>
          <BannerRow>
            <Banner>Manual Invoice Excel Template</Banner>
            <DashBtn>DASHBOARD</DashBtn>
          </BannerRow>
          <Invoice>
            <InvoiceTitle>INVOICE</InvoiceTitle>
            <TitleRule />
            <Contact>
              <ContactLine $ls={-0.65}>(234) 745-34-22 - (234) 745-34-23</ContactLine>
              <ContactLine $ls={0.35}>www.excelanss.com - info@excelanss.com</ContactLine>
              <ContactLine $ls={-0.1}>1345 Fleming Street Port Charlotte, FL 33952</ContactLine>
            </Contact>
            <BillWrap>
              <BillTo>
                <BillHead $c="#7f7f7f" $ls={-0.5}>BILL TO :</BillHead>
                <BillHead $c="#367272" $ls={0.5}>Electrical Constructions, Ltd.</BillHead>
                <BillLine><BillKey>A</BillKey><BillColon>:</BillColon><BillValue $ls={0.68}>593 Fleming Street, Charlotte</BillValue></BillLine>
                <BillLine><BillKey>A</BillKey><BillColon>:</BillColon><BillValue $ls={0.43}>North Carolina 33952</BillValue></BillLine>
                <BillLine><BillKey>M</BillKey><BillColon>:</BillColon><BillValue $ls={1.13}>info@electrical.com</BillValue></BillLine>
                <BillLine><BillKey>P</BillKey><BillColon>:</BillColon><BillValue $ls={-0.18}>(234) 227-18-92</BillValue></BillLine>
              </BillTo>
              <Summary>
                <SummaryKey $ls={-0.3}>TOTAL DUE :</SummaryKey>
                <SummaryVal $size={28} $bold $c="#367272" $ls={-0.95}>$5.578,05</SummaryVal>
                <SummaryKey>INVOICE NO :</SummaryKey>
                <SummaryVal $size={25} $ls={-0.5} $pr={2}>129991</SummaryVal>
                <SummaryKey $ls={-0.4}>DATE :</SummaryKey>
                <SummaryVal $size={20} $ls={0.17}>September 12, 2020</SummaryVal>
              </Summary>
            </BillWrap>
            <TableHead>
              <NoCell $head>NO</NoCell>
              <div>ITEM</div>
              <NumCell>UNIT PRICE</NumCell>
              <NumCell>QTY</NumCell>
              <NumCell $pr={3}>TOTAL</NumCell>
            </TableHead>
            <TableBody>
              {rows.map(([no, item, ls, price, qty, total]) => (
                <TableRow key={no}>
                  <NoCell>{no}</NoCell>
                  <ItemCell $ls={ls}>{item}</ItemCell>
                  <NumCell $pr={10} $ls={-0.6}>{price}</NumCell>
                  <NumCell $ls={-0.6}>{qty}</NumCell>
                  <NumCell $pr={3} $ls={-0.6}>{total}</NumCell>
                </TableRow>
              ))}
            </TableBody>
          </Invoice>
        </Sheet>
        <VScroll>
          <ScrollBtn><UpCaret /></ScrollBtn>
          <VTrack>
            <VThumb />
          </VTrack>
          <ScrollBtn><Caret /></ScrollBtn>
        </VScroll>
      </SheetRow>

      <HStrip>
        <ScrollBtn $w={14}>
          <svg width="4" height="7" viewBox="0 0 4 7" fill="#777"><path d="M4 0v7L0 3.500z" /></svg>
        </ScrollBtn>
        <HTrack><HThumb /></HTrack>
        <ScrollBtn $w={14}>
          <svg width="4" height="7" viewBox="0 0 4 7" fill="#777"><path d="M0 0v7l4-3.500z" /></svg>
        </ScrollBtn>
      </HStrip>

      <StatusBar>
        <Place $ml={8}>
          <svg width="13" height="14" viewBox="0 0 13 14" fill="none" stroke="#666">
            <circle cx="2.500" cy="2.500" r="2" fill="#666" />
            <path d="M6 2h7" strokeWidth="2" />
            <path d="M.5 5.500h12v8H.5zM.5 8h12M.5 10.500h12M4 5.500v8M8 5.500v8" />
          </svg>
        </Place>
        <ViewBtn $w={38} $ml={1613} $on>
          <svg width="13" height="13" viewBox="0 0 13 13" fill="none" stroke="#777">
            <path d="M.5 .5h12v12H.5zM.5 4.500h12M.5 8.500h12M4.500 .5v12M8.500 .5v12" />
          </svg>
        </ViewBtn>
        <ViewBtn $w={38}>
          <svg width="14" height="14" viewBox="0 0 14 14" fill="none" stroke="#777">
            <path d="M.5 .5h13v13H.5zM3.500 3.500h7v7h-7zM5 5.500h4M5 8.500h4" />
          </svg>
        </ViewBtn>
        <ViewBtn $w={38}>
          <svg width="14" height="14" viewBox="0 0 14 14" fill="none" stroke="#777">
            <path d="M.5 .5h13v13H.5zM.5 9.500h6v-9M6.500 5h7" />
          </svg>
        </ViewBtn>
        <ZoomSign $ml={5} />
        <ZoomTrack><ZoomThumb /></ZoomTrack>
        <ZoomSign $ml={4} $plus />
        <ZoomText>%120</ZoomText>
      </StatusBar>
    </Page>
  );
}
